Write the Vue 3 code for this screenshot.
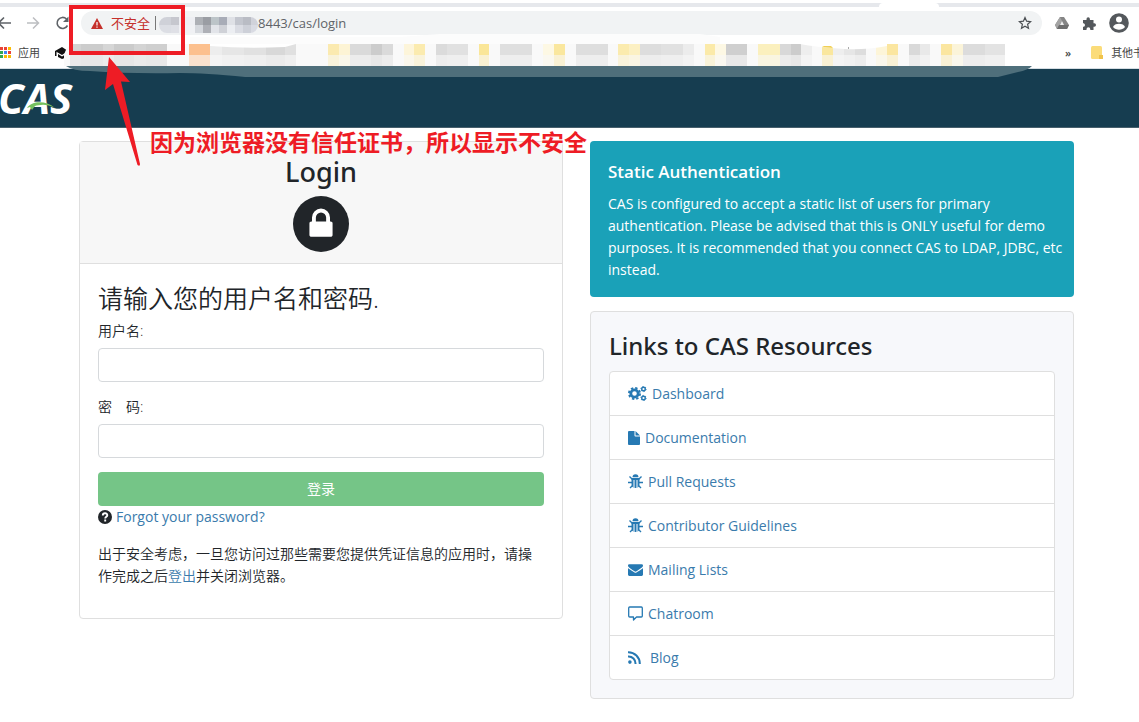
<script setup>
import { ref } from 'vue'

const username = ref('')
const password = ref('')

const links = [
  { icon: 'gears', label: 'Dashboard' },
  { icon: 'file', label: 'Documentation' },
  { icon: 'bug', label: 'Pull Requests' },
  { icon: 'bug', label: 'Contributor Guidelines' },
  { icon: 'mail', label: 'Mailing Lists' },
  { icon: 'chat', label: 'Chatroom' },
  { icon: 'rss', label: 'Blog' },
]

const appDots = ['#ea4335', '#ea4335', '#fbbc05', '#34a853', '#4285f4', '#ea4335', '#34a853', '#fbbc05', '#fbbc05']

// Censored host name: x, width, upper colour, lower colour
const hostCells = [
  [159, 12, '#cfd1d8', '#dcdee4'],
  [171, 8, '#c6c7ce', '#dfe0e6'],
  [179, 16, '#eeeff3', '#f0f1f4'],
  [195, 8, '#adb0b5', '#d5d8dd'],
  [203, 8, '#9a9da3', '#aeb0b6'],
  [211, 8, '#bcc4c8', '#e2e4e9'],
  [219, 8, '#a8acb7', '#cfd1d7'],
  [227, 8, '#dfe1e6', '#eceef2'],
  [235, 8, '#c3c6ce', '#dadce3'],
  [243, 8, '#b9bcc4', '#cdd0d8'],
  [251, 7, '#d0d2da', '#d9dbe3'],
]

// Censored bookmarks: x, width, colour
const bookmarkCells = [
  [70, 11, '#d3d3d3'], [81, 22, '#cccccc'], [103, 11, '#d6d6d6'], [114, 20, '#cbcbcb'],
  [134, 12, '#d4d4d4'], [146, 21, '#cfcfcf'], [189, 21, '#fcc08e'], [210, 12, '#ededed'],
  [222, 22, '#e6e6e6'], [244, 22, '#e1e1e1'], [266, 19, '#d8d8d8'], [285, 11, '#e0e0e0'],
  [328, 11, '#fbeab0'], [339, 11, '#fdf4d5'], [350, 21, '#dadada'], [371, 11, '#cccccc'],
  [382, 11, '#dadada'], [404, 10, '#fdf5da'], [414, 11, '#fbebaf'], [436, 11, '#dbdbdb'],
  [447, 21, '#e1e1e1'], [479, 10, '#fae698'], [500, 32, '#dfdfdf'], [543, 11, '#fdf8e4'],
  [554, 11, '#fae79e'], [576, 32, '#dedede'], [618, 11, '#fbebae'], [629, 11, '#fcf0c3'],
  [640, 21, '#dddddd'], [661, 22, '#e1e1e1'], [683, 11, '#ececec'], [705, 10, '#fbeaa9'],
  [715, 11, '#fdf8e4'], [726, 21, '#cfcfcf'], [758, 22, '#fbf0be'], [780, 11, '#d8d8d8'],
  [791, 10, '#cccccc'], [801, 11, '#eeeeee'], [822, 11, '#fae79e'], [833, 11, '#eeeeee'],
  [844, 11, '#e6e6e6'], [855, 11, '#dddddd'], [876, 11, '#fdf5d8'], [887, 11, '#fbe6a0'],
  [909, 11, '#d9d9d9'], [920, 10, '#e9e9e9'], [941, 11, '#fbe6a0'], [952, 11, '#fbf4d9'],
  [963, 22, '#dcdcdc'], [985, 20, '#e3e3e3'],
]
</script>

<template>
  <div class="page">
    <div class="browser">
      <div class="tabs"><span class="tab"></span></div>
      <div class="toolbar">
        <div class="nav">
          <button type="button" aria-label="Back">
            <svg width="16" height="16" viewBox="0 0 16 16"><path d="M15 8H3M8 2.500L2.500 8 8 13.500" fill="none" stroke="#5f6368" stroke-width="1.600" /></svg>
          </button>
          <button type="button" aria-label="Forward">
            <svg width="16" height="16" viewBox="0 0 16 16"><path d="M2 8h11M8 2.500L13.500 8 8 13.500" fill="none" stroke="#bcbec1" stroke-width="1.500" /></svg>
          </button>
          <button type="button" aria-label="Reload">
            <svg width="16" height="16" viewBox="0 0 16 16"><path d="M13.500 10.500A5.500 5.500 0 1 1 12.500 4" fill="none" stroke="#5f6368" stroke-width="1.600" /><path d="M14.500 1.500V7H9z" fill="#5f6368" /></svg>
          </button>
        </div>
        <div class="address">
          <svg width="12" height="11" viewBox="0 0 12 11"><path d="M6 0l6 11H0z" fill="#c5302b" /><path d="M6 4v3.500M6 8.500v1.200" stroke="#fff" stroke-width="1.200" /></svg>
          <span class="unsafe">不安全</span>
          <span class="bar"></span>
          <span class="url">8443/cas/login</span>
          <button type="button" aria-label="Bookmark" class="star">
            <svg width="14" height="14" viewBox="0 0 14 14"><path d="M7 1.500l1.600 3.700 4 .4-3 2.700.9 4L7 10.200l-3.500 2.100.9-4-3-2.700 4-.4z" fill="none" stroke="#4c5054" stroke-width="1.200" /></svg>
          </button>
        </div>
        <div class="tools">
          <svg width="14" height="14" viewBox="0 0 14 14"><path d="M5 1h4l5 8-2 4H2L0 9z" fill="#858585" /><path d="M5 1L0 9l2 4 5-8z" fill="#a4a4a4" /><path d="M2 13l2-4h10l-2 4z" fill="#6e6e6e" /><path d="M7 5l2 4H5z" fill="#eee" /></svg>
          <svg width="14" height="14" viewBox="0 0 14 14"><path d="M1 4h3.500V3a1.700 1.700 0 0 1 3.400 0v1H11.500v3.300h.8a1.700 1.700 0 0 1 0 3.400h-.8V14H8.300v-.8a1.900 1.900 0 0 0-3.800 0v.8H1v-3.200h.7a1.900 1.900 0 0 0 0-3.600H1z" fill="#54585c" /></svg>
          <svg width="20" height="20" viewBox="0 0 20 20"><circle cx="10" cy="10" r="9.800" fill="#54585c" /><circle cx="10" cy="6.500" r="3" fill="#fff" /><path d="M4 14c1-4.500 11-4.500 12 0-3 3.500-9 3.500-12 0z" fill="#fff" /></svg>
        </div>
      </div>
      <div class="bookmarks">
        <div class="apps"><i v-for="(c, i) in appDots" :key="i" :style="{ background: c }"></i></div>
        <span>应用</span>
        <svg class="cap" width="13" height="12" viewBox="0 0 13 12"><path d="M0 4l7-4 6 4-6 4z" fill="#111" /><path d="M3 7l4 2.500L11 7v3.500L7 12l-4-2zM0 4h1.500v5H0z" fill="#111" /></svg>
        <div class="others">
          <span class="more">»</span>
          <span class="sep"></span>
          <svg width="12" height="13" viewBox="0 0 12 13"><rect width="11" height="13" rx="1.500" fill="#fbdc79" /><path d="M8 9h4v4H8z" fill="#f0c34c" /></svg>
          <span class="rest">其他书签</span>
        </div>
      </div>
    </div>

    <header class="banner">
      <a href="#" class="logo">CAS
        <svg width="28" height="9" viewBox="0 0 28 9"><path d="M0 7C5 0 18-1 28 7 19 2 12 4 8 5L5 9 3 6z" fill="#76c15e" /></svg>
      </a>
    </header>

    <main class="content">
      <section class="card login">
        <div class="card-head">
          <h2>Login</h2>
          <div class="lock">
            <svg width="36" height="36" viewBox="0 0 1792 1792"><path d="M640 768h512v-192q0-106-75-181t-181-75-181 75-75 181v192zm832 96v576q0 40-28 68t-68 28h-960q-40 0-68-28t-28-68v-576q0-40 28-68t68-28h32v-192q0-184 132-316t316-132 316 132 132 316v192h32q40 0 68 28t28 68z" fill="#fff" /></svg>
          </div>
        </div>
        <form class="card-body" @submit.prevent>
          <h3>请输入您的用户名和密码.</h3>
          <label for="username">用户名:</label>
          <input id="username" v-model="username" type="text" />
          <label for="password">密　码:</label>
          <input id="password" v-model="password" type="password" />
          <button type="submit" class="submit">登录</button>
          <div class="forgot">
            <svg width="14" height="14" viewBox="0 0 14 14"><circle cx="7" cy="7" r="7" fill="#212529" /><path d="M4.800 5.500C4.800 2.500 9.300 2.500 9.300 5.200 9.300 6.800 7.200 6.800 7.200 8.600M7.200 9.600v2" fill="none" stroke="#fff" stroke-width="1.900" /></svg>
            <a href="#">Forgot your password?</a>
          </div>
          <p>出于安全考虑，一旦您访问过那些需要您提供凭证信息的应用时，请操作完成之后<a href="#">登出</a>并关闭浏览器。</p>
        </form>
      </section>

      <div class="side">
        <section class="notice">
          <h5>Static Authentication</h5>
          <p>CAS is configured to accept a static list of users for primary authentication. Please be advised that this is ONLY useful for demo purposes. It is recommended that you connect CAS to LDAP, JDBC, etc instead.</p>
        </section>
        <section class="card resources">
          <h4>Links to CAS Resources</h4>
          <ul>
            <li v-for="link in links" :key="link.label">
              <a href="#" :class="link.icon">
                <svg v-if="link.icon === 'gears'" width="19" height="15" viewBox="0 0 19 15" fill="none" stroke="#2679b3">
                  <circle cx="6.500" cy="7.500" r="3.700" stroke-width="2.800" />
                  <circle cx="6.500" cy="7.500" r="5.600" stroke-width="1.800" stroke-dasharray="2.400 2" />
                  <circle cx="15.500" cy="3" r="1.800" stroke-width="1.400" />
                  <circle cx="15.500" cy="3" r="2.600" stroke-width="1" stroke-dasharray="1.300 1.400" />
                  <circle cx="15.500" cy="12" r="1.800" stroke-width="1.400" />
                  <circle cx="15.500" cy="12" r="2.600" stroke-width="1" stroke-dasharray="1.300 1.400" />
                </svg>
                <svg v-else-if="link.icon === 'file'" width="12" height="14" viewBox="0 0 12 14" fill="#2679b3"><path d="M1 0h5.500v4.500q0 1 1 1H12V13q0 1-1 1H1q-1 0-1-1V1q0-1 1-1zM7.500 0L12 4.500H7.500z" /></svg>
                <svg v-else-if="link.icon === 'bug'" width="15" height="15" viewBox="0 0 15 15">
                  <path d="M4.500 3.200a3 3 0 0 1 6 0zM3.500 4h8v6a4 4 0 0 1-8 0z" fill="#2679b3" />
                  <path d="M1.500 2.500l3 3M13.500 2.500l-3 3M0 8.500h4M15 8.500h-4M2 14l3-3M13 14l-3-3" stroke="#2679b3" stroke-width="1.400" />
                  <path d="M6 6v8M9 6v8" stroke="#fff" stroke-width="1" />
                </svg>
                <svg v-else-if="link.icon === 'mail'" width="15" height="15" viewBox="0 0 1792 1792" fill="#2679b3"><path d="M1792 710v794q0 66-47 113t-113 47h-1472q-66 0-113-47t-47-113v-794q44 49 101 87 362 246 497 345 57 42 92.500 65.500t94.500 48 110 24.500h2q51 0 110-24.500t94.500-48 92.500-65.500q170-123 498-345 57-39 100-87zm0-294q0 79-49 151t-122 123q-376 261-468 325-10 7-42.500 31t-54 38.500-52 32.500-57.500 27-50 9h-2q-23 0-50-9t-57.500-27-52-32.500-54-38.500-42.500-31q-91-64-262-182.500t-205-142.500q-62-42-117-115.500t-55-136.500q0-78 41.500-130t118.500-52h1472q65 0 112.500 47t47.500 113z" /></svg>
                <svg v-else-if="link.icon === 'chat'" width="15" height="15" viewBox="0 0 15 15"><path d="M1.700 1h11.600q1 0 1 1v8q0 1-1 1H8.500L5.500 14v-3H1.700q-1 0-1-1V2q0-1 1-1z" fill="none" stroke="#2679b3" stroke-width="1.300" stroke-linejoin="round" /></svg>
                <svg v-else width="13" height="13" viewBox="0 0 13 13"><circle cx="1.900" cy="11.100" r="1.800" fill="#2679b3" /><path d="M0 5.500A7 7 0 0 1 7.500 13M0 1.200A11.500 11.500 0 0 1 11.800 13" fill="none" stroke="#2679b3" stroke-width="2" /></svg>
                <span>{{ link.label }}</span>
              </a>
            </li>
          </ul>
        </section>
      </div>
    </main>

    <svg class="overlay" width="1139" height="180" viewBox="0 0 1139 180">
      <defs>
        <clipPath id="host"><rect x="159" y="17" width="99" height="16" rx="8" /></clipPath>
        <clipPath id="marks"><path d="M64 66V55Q66 47 72 44H1005V66z" /></clipPath>
      </defs>
      <g clip-path="url(#host)">
        <template v-for="c in hostCells" :key="c[0]">
          <rect :x="c[0]" y="17" :width="c[1]" height="8" :fill="c[2]" />
          <rect :x="c[0]" y="25" :width="c[1]" height="8" :fill="c[3]" />
        </template>
      </g>
      <path d="M190 37H400L440 34H700L720 37V44H190z" fill="#fcfcfc" />
      <g clip-path="url(#marks)">
        <rect x="64" y="44" width="941" height="22" fill="#f9f9f9" />
        <template v-for="c in bookmarkCells" :key="c[0]">
          <rect :x="c[0]" y="44" :width="c[1]" height="11" :fill="c[2]" />
          <rect :x="c[0]" y="55" :width="c[1]" height="11" fill="#f9f9f9" />
          <rect :x="c[0]" y="55" :width="c[1]" height="11" :fill="c[2]" opacity="0.400" />
        </template>
      </g>
      <path d="M210 44H296L285 47Q245 49 210 46z" fill="#fff" />
      <path d="M800 44H887V46Q865 50 845 49 815 47 800 44z" fill="#fff" />
      <path d="M822 47l2-1h7l2 2z" fill="#f0cf55" />
      <path d="M848 48h1" stroke="#555" />
      <path d="M66 66H1032Q1028 70 1018 72L998 77H245Q205 73 180 73 130 74 90 71 73 71 66 66z" fill="#4f6f7b" />
      <rect x="71" y="7" width="112" height="46" fill="none" stroke="#ee1c25" stroke-width="4" />
      <path d="M109 57L130 82 121 81.500 140 164Q140 167 137.500 165L113 84 105 90z" fill="#ee1c25" />
    </svg>
    <div class="remark">因为浏览器没有信任证书，所以显示不安全</div>
  </div>
</template>

<style>
body {
  background: #fff;
}
</style>

<style scoped>
.page {
  position: relative;
  overflow: hidden;
  min-height: 100vh;
  font-family: "Open Sans", "Noto Sans CJK SC", sans-serif;
  font-size: 14px;
  line-height: 22px;
  color: #212529;
}
.page * {
  box-sizing: border-box;
}
svg {
  display: block;
  flex: none;
}
h2, h3, h4, h5, p, ul {
  margin: 0;
  padding: 0;
  font-weight: 400;
}
a {
  color: #3a7bac;
  text-decoration: none;
}
button {
  padding: 0;
  border: 0;
  background: none;
  font: inherit;
}
.browser {
  height: 69px;
  padding-top: 3px;
  border-bottom: 1px solid #d5dde3;
}
.tabs {
  display: flex;
  justify-content: flex-end;
  height: 4px;
  padding-right: 200px;
  background: #e6e8ec;
}
.tab {
  width: 60px;
  background: #fff;
  border-radius: 4px 4px 0 0;
}
.toolbar {
  display: flex;
  align-items: center;
  gap: 13px;
  height: 32px;
  padding-right: 10px;
}
.nav {
  display: flex;
  gap: 13px;
  width: 69px;
  margin-left: -4px;
  flex: none;
}
.nav + .address {
  margin-left: 3px;
}
.address {
  display: flex;
  flex: 1;
  align-items: center;
  height: 24px;
  padding: 0 10px;
  border-radius: 12px;
  background: #f1f3f4;
  font-size: 13px;
}
.unsafe {
  margin-left: 8px;
  color: #c5302b;
}
.bar {
  width: 1px;
  height: 14px;
  margin-left: 5px;
  background: #777;
}
.url {
  margin-left: 102px;
  color: #5f6368;
}
.star {
  margin-left: auto;
}
.tools {
  display: flex;
  align-items: center;
  gap: 13px;
}
.bookmarks {
  display: flex;
  align-items: center;
  height: 27px;
  font-size: 11px;
  color: #444;
}
.apps {
  display: grid;
  grid-template-columns: repeat(3, 3px);
  gap: 1px;
  margin-right: 7px;
}
.apps i {
  height: 3px;
}
.cap {
  margin-left: 15px;
}
.others {
  display: flex;
  align-items: center;
  width: 74px;
  margin-left: auto;
  white-space: nowrap;
  overflow: hidden;
}
.more {
  font-weight: 600;
}
.sep {
  width: 1px;
  height: 14px;
  margin: 0 11px 0 9px;
  background: #ddd;
}
.rest {
  margin-left: 8px;
}
.banner {
  display: flex;
  align-items: center;
  height: 59px;
  background: #163d50;
  border-bottom: 1px solid #48606d;
}
.logo {
  position: relative;
  margin-left: -2px;
  font: italic 700 42px/58px "Open Sans", sans-serif;
  color: #fff;
}
.logo svg {
  position: absolute;
  left: 29px;
  top: 32px;
}
.content {
  display: grid;
  grid-template-columns: 1fr 1fr;
  align-items: start;
  gap: 27px;
  padding: 13px 65px 0 79px;
}
.card {
  border: 1px solid #dfdfdf;
  border-radius: 4px;
}
.card-head {
  height: 122px;
  padding-top: 14px;
  background: #f7f7f7;
  border-bottom: 1px solid #dfdfdf;
}
h2 {
  font-family: "Noto Sans", sans-serif;
  font-size: 27px;
  line-height: 32px;
  font-weight: 500;
  text-align: center;
}
.lock {
  display: flex;
  align-items: center;
  justify-content: center;
  width: 56px;
  height: 56px;
  margin: 8px auto 0;
  border-radius: 50%;
  background: #212529;
}
.card-body {
  display: flex;
  flex-direction: column;
  padding: 18px 18px 31px;
}
h3 {
  font-size: 25px;
  line-height: 32px;
  font-weight: 350;
  margin-bottom: 6px;
}
label,
.card-body p {
  font-weight: 350;
}
label {
  line-height: 22px;
  margin-bottom: 6px;
}
input {
  width: 100%;
  height: 34px;
  margin-bottom: 14px;
  padding: 0 10px;
  border: 1px solid #d6d9dc;
  border-radius: 4px;
  font: inherit;
  outline: 0;
}
.submit {
  height: 34px;
  border-radius: 4px;
  background: #75c587;
  color: #fff;
}
.forgot {
  display: flex;
  align-items: center;
  gap: 4px;
  margin-bottom: 15px;
}
.side {
  display: grid;
  gap: 14px;
}
.notice {
  padding: 20px 8px 16px 18px;
  border-radius: 4px;
  background: #1aa1b8;
  color: #fff;
}
h5 {
  font-size: 17px;
  line-height: 22px;
  font-weight: 600;
  margin-bottom: 10px;
}
.resources {
  padding: 18px;
  background: #f7f8fb;
}
h4 {
  font-family: "Noto Sans", sans-serif;
  font-size: 24px;
  line-height: 32px;
  font-weight: 500;
  margin-bottom: 9px;
}
ul {
  list-style: none;
  border: 1px solid #dfdfdf;
  border-radius: 4px;
  background: #fff;
}
li + li {
  border-top: 1px solid #dfdfdf;
}
li a {
  display: flex;
  align-items: center;
  gap: 5px;
  height: 43px;
  padding: 0 18px;
}
li a.rss {
  gap: 9px;
}
.overlay {
  position: absolute;
  top: 0;
  left: 0;
  pointer-events: none;
}
.remark {
  position: absolute;
  left: 150px;
  top: 125px;
  font-family: "Noto Sans CJK SC", sans-serif;
  font-size: 23px;
  line-height: 32px;
  font-weight: 700;
  color: #ee1c25;
  white-space: nowrap;
}
</style>
